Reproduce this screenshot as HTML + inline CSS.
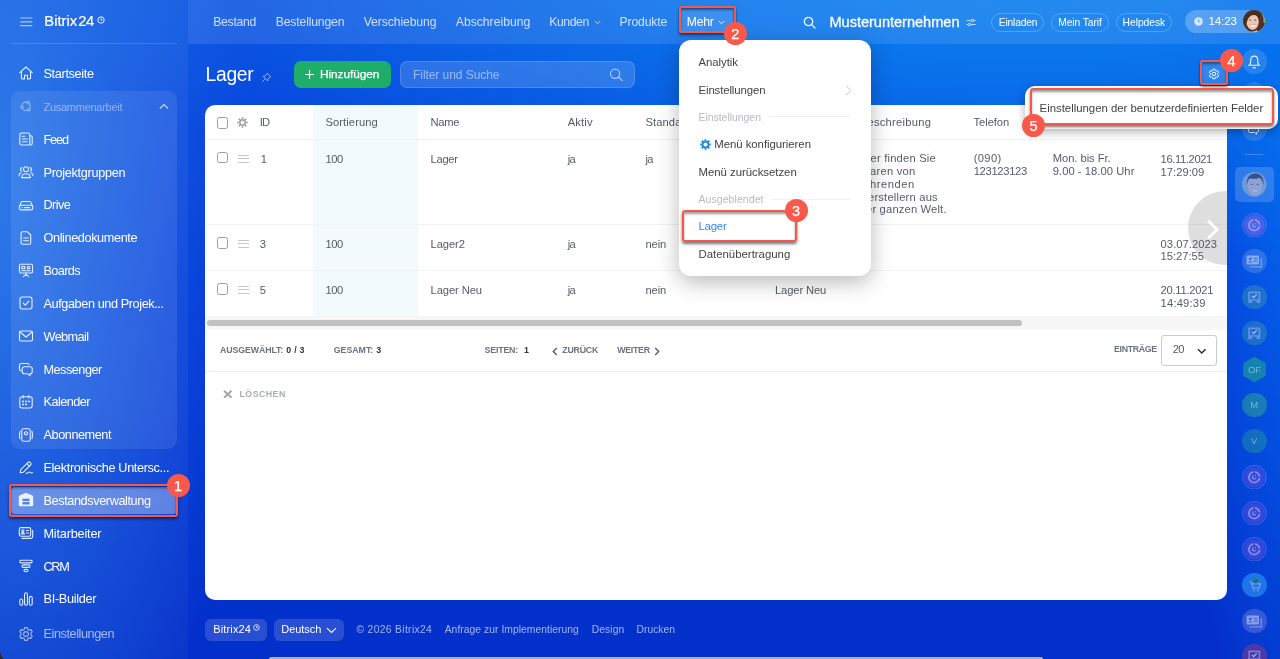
<!DOCTYPE html>
<html lang="de">
<head>
<meta charset="utf-8">
<title>Lager</title>
<style>
*{box-sizing:border-box;margin:0;padding:0}
html,body{width:1280px;height:659px;overflow:hidden}
body{font-family:"Liberation Sans",sans-serif;color:#fff;position:relative;
background:
 radial-gradient(ellipse 130px 760px at 1300px 60px, rgba(4,112,238,.92), rgba(4,112,238,0) 100%),
 radial-gradient(ellipse 1000px 290px at 1030px -30px, rgba(10,130,240,1), rgba(10,130,240,.75) 35%, rgba(10,130,240,0) 100%),
 radial-gradient(ellipse 250px 720px at 0px 180px, rgba(40,125,234,.85), rgba(40,125,234,0) 100%),
 linear-gradient(180deg,#0a48de 0%,#0437d8 45%,#0330ca 100%);}
.abs{position:absolute}
.t{position:absolute;white-space:nowrap;line-height:1}
#top{position:absolute;left:188px;top:0;width:1092px;height:43.5px;background:rgba(255,255,255,.105)}
#sep{position:absolute;left:11px;top:43px;width:166px;height:1px;background:rgba(255,255,255,.15)}
#group{position:absolute;left:11px;top:91px;width:166px;height:358px;border-radius:9px;background:rgba(255,255,255,.085)}
.ic{position:absolute;left:18px;width:16px;height:16px}
.ic svg{display:block;width:16px;height:16px;fill:none;stroke:#fff;stroke-width:1.1;stroke-linecap:round;stroke-linejoin:round;opacity:.88}
.pill{position:absolute;top:13px;height:18.8px;border:1px solid rgba(255,255,255,.22);border-radius:10px}
.red{position:absolute;border:2.8px solid #f6584b;border-radius:3px;box-shadow:0 2px 3px rgba(0,0,0,.55), inset 0 2px 2.5px rgba(0,0,0,.4)}
.badge{position:absolute;width:23px;height:23px;border-radius:50%;background:#f9594b;color:#fff;font-size:14.5px;line-height:24.4px;text-align:center;-webkit-text-stroke:.25px #fff}
#grid{position:absolute;left:205px;top:104.5px;width:1022px;height:495.5px;background:#fff;border-radius:10px;overflow:hidden}
.hl{position:absolute;left:0;width:1022px;height:1px;background:#f1f3f5}
.cb{position:absolute;left:11.500px;width:11.5px;height:11.5px;border:1.2px solid #999da4;border-radius:2.5px;background:#fff}
.drag{position:absolute;left:33px;width:11px;height:8px;border-top:1.2px solid #c4c7cc;border-bottom:1.2px solid #c4c7cc}
.drag:after{content:"";position:absolute;left:0;right:0;top:2.300px;height:1.2px;background:#c4c7cc}
.rc{position:absolute;left:1242px;width:24.5px;height:24.5px;border-radius:50%}
.rc svg{position:absolute;left:0;top:0;width:24.5px;height:24.5px}
.rc span{position:absolute;left:0;right:0;top:0;line-height:24.5px;text-align:center;font-size:9.5px;color:rgba(255,255,255,.6)}
#pop{position:absolute;left:679px;top:40px;width:191.5px;height:236px;background:#fff;border-radius:12px;box-shadow:0 6px 22px rgba(0,0,0,.28)}
#tip{position:absolute;left:1025px;top:86px;width:252.8px;height:43.4px;background:#fff;border-radius:10px;box-shadow:0 3px 10px rgba(0,0,0,.3)}
</style>
</head>
<body>
<div id="app" style="position:absolute;left:0;top:0;width:1280px;height:659px;will-change:transform">
<div id="top"></div>
<div class="abs" style="left:0;top:0;width:188px;height:659px;background:linear-gradient(180deg,rgba(255,255,255,.05) 0%,rgba(255,255,255,.045) 60%,rgba(255,255,255,.03) 100%)"></div>
<div id="sep"></div>
<div id="group"></div>
<svg class="abs" style="left:20px;top:16.500px" width="13" height="10" viewBox="0 0 13 10"><path d="M.3 1h12M.3 4.800h12M.3 8.600h12" stroke="rgba(255,255,255,.62)" stroke-width="1.200" fill="none"/></svg>
<svg class="abs" style="left:96.500px;top:15.500px" width="8" height="8" viewBox="0 0 8 8"><circle cx="4" cy="4" r="3.200" stroke="#fff" stroke-width=".9" fill="none"/><path d="M4 2.200V4.100h1.500" stroke="#fff" stroke-width=".9" fill="none"/></svg>
<div class="abs" style="left:11px;top:487.400px;width:166px;height:26.600px;background:rgba(255,255,255,.33);border-radius:4px"></div>
<svg class="abs" style="left:159px;top:102.500px" width="10" height="7" viewBox="0 0 10 7"><path d="M1 5.500 5 1.500l4 4" stroke="rgba(255,255,255,.72)" stroke-width="1.200" fill="none"/></svg>
<div class="ic" style="top:65.4px"><svg viewBox="0 0 16 16"><path d="M1.800 7.600 8 2l6.200 5.600"/><path d="M3.400 6.500V13c0 .5.400.9.900.9h2.200v-3.600h3v3.600h2.200c.5 0 .9-.4.900-.9V6.500"/></svg></div>
<div class="ic" style="top:98.1px"><svg viewBox="0 0 16 16" style="opacity:0.45"><circle cx="8" cy="8.300" r="4.200"/><circle cx="10.300" cy="4.600" r="1.300" fill="#2f66de"/><circle cx="3.900" cy="9" r="1.300" fill="#2f66de"/><circle cx="10.800" cy="11.600" r="1.300" fill="#2f66de"/></svg></div>
<div class="ic" style="top:131.1px"><svg viewBox="0 0 16 16"><rect x="1.800" y="2" width="10" height="12" rx="1.800"/><path d="M11.800 4.800h1c.8 0 1.400.6 1.400 1.400v6.300c0 .8-.7 1.500-1.500 1.500h-1"/><path d="M4.300 5.200h2.500M4.300 8h5M4.300 10.800h5"/></svg></div>
<div class="ic" style="top:163.9px"><svg viewBox="0 0 16 16"><circle cx="8" cy="5.200" r="2.500"/><path d="M3.600 13.600c0-2.500 1.900-3.900 4.400-3.900s4.400 1.400 4.400 3.900z"/><path d="M3.800 3.600c-1.700.4-1.700 3.200 0 3.600M1 11.800c0-1.600.8-2.600 2-2.900M12.200 3.600c1.700.4 1.700 3.200 0 3.600M15 11.800c0-1.600-.8-2.600-2-2.900"/></svg></div>
<div class="ic" style="top:196.7px"><svg viewBox="0 0 16 16"><path d="M1.400 9.500 3 5.600c.3-.7.900-1.100 1.600-1.100h6.800c.7 0 1.300.4 1.600 1.100l1.600 3.900"/><rect x="1.300" y="8.300" width="13.400" height="4.600" rx="1.700"/><path d="M4 10.600h.3M6.500 10.600h5.200"/></svg></div>
<div class="ic" style="top:229.6px"><svg viewBox="0 0 16 16"><path d="M4.300 1.800h5.200l3.200 3.200v8c0 .7-.5 1.200-1.200 1.200H4.300c-.7 0-1.200-.5-1.200-1.200V3c0-.7.500-1.200 1.200-1.200z"/><path d="M5.600 8h4.800M5.600 10.800h4.800"/></svg></div>
<div class="ic" style="top:262.4px"><svg viewBox="0 0 16 16"><rect x="1.500" y="2.200" width="13" height="8.800" rx="1.200"/><rect x="3.800" y="4.500" width="3" height="2.200"/><circle cx="10.600" cy="5.600" r="1.300"/><path d="M3.800 8.800h8.400M8 11v1.300M5.300 14.600 8 12.300l2.700 2.300"/></svg></div>
<div class="ic" style="top:295.2px"><svg viewBox="0 0 16 16"><rect x="2" y="2" width="12" height="12" rx="2.200"/><path d="M5.200 8.200 7.200 10.100l3.700-3.900"/></svg></div>
<div class="ic" style="top:328.0px"><svg viewBox="0 0 16 16"><rect x="1.500" y="3" width="13" height="10" rx="1.500"/><path d="M2 4 8 9l6-5"/></svg></div>
<div class="ic" style="top:360.9px"><svg viewBox="0 0 16 16"><path d="M6.200 5.800h6c1.100 0 2 .9 2 2v3c0 1.100-.9 2-2 2h-.2v1.900l-2.200-1.900H6.200c-1.100 0-2-.9-2-2v-3c0-1.100.9-2 2-2z"/><path d="M2.800 10c-.8-.3-1.300-1-1.300-1.900V4.500c0-1.100.9-2 2-2h5.700c.8 0 1.500.5 1.800 1.100"/></svg></div>
<div class="ic" style="top:393.7px"><svg viewBox="0 0 16 16"><rect x="1.800" y="2.800" width="12.400" height="11.200" rx="2.200"/><path d="M5.200 1.600v2.400M10.800 1.600v2.400"/><path d="M4.900 7.400h.3M7.900 7.400h.3M10.800 7.400h.3M4.900 10.400h.3M7.900 10.400h.3" stroke-width="1.700"/></svg></div>
<div class="ic" style="top:426.5px"><svg viewBox="0 0 16 16"><rect x="3.800" y="1.800" width="8.400" height="12.400" rx="1.800"/><path d="M2 4.300q-.9 3.700 0 7.400M14 4.300q.9 3.700 0 7.400"/><circle cx="8" cy="6.300" r="1.600"/></svg></div>
<div class="ic" style="top:459.4px"><svg viewBox="0 0 16 16"><path d="M2.800 10.600 10 3.400c.6-.6 1.500-.6 2.100 0l.5.500c.6.600.6 1.500 0 2.100L5.400 13.200 2.200 13.800z"/><path d="M8.800 4.700l2.500 2.500"/><path d="M8 14.300c1.500.4 2.400-1.300 3.400-1.300s1.100 1.500 3.100.8"/></svg></div>
<div class="ic" style="top:492.2px"><svg viewBox="0 0 16 16"><path d="M.8 4.800c0-.6.300-1 .8-1.200L7.400 1.100c.4-.2.800-.2 1.200 0l5.800 2.500c.5.200.8.600.8 1.200v8.200c0 .7-.5 1.200-1.200 1.200H2c-.7 0-1.200-.5-1.200-1.200z" fill="#fff" stroke="none"/><rect x="4.500" y="6.700" width="7" height="2.300" fill="#4f7fe6" stroke="none"/><rect x="4.500" y="10" width="7" height="2.450" fill="#4f7fe6" stroke="none"/></svg></div>
<div class="ic" style="top:525.0px"><svg viewBox="0 0 16 16"><rect x="1.300" y="2.600" width="11.400" height="8.600" rx="1.700"/><path d="M14.700 5.200v6.400c0 1-.8 1.800-1.800 1.800H4"/><circle cx="4.800" cy="5.800" r="1.100"/><path d="M3.100 9c.2-1 .9-1.400 1.700-1.400s1.500.4 1.700 1.400zM8.300 5.500h2.400M8.300 8h2.400"/></svg></div>
<div class="ic" style="top:557.9px"><svg viewBox="0 0 16 16"><rect x="1.800" y="2.200" width="12.400" height="2.700" rx="1.350"/><rect x="4" y="6.900" width="8" height="2.500" rx="1.250"/><rect x="6" y="11.400" width="4" height="2.400" rx="1.200"/></svg></div>
<div class="ic" style="top:590.7px"><svg viewBox="0 0 16 16"><rect x="1.800" y="8" width="2.900" height="6.200" rx="1.450"/><rect x="6.550" y="1.800" width="2.900" height="12.400" rx="1.450"/><rect x="11.300" y="5.400" width="2.900" height="8.800" rx="1.450"/></svg></div>
<div class="ic" style="top:625.7px"><svg viewBox="0 0 16 16" style="opacity:0.6"><circle cx="8" cy="8" r="2.400"/><path d="M6.700 1.600h2.600l.5 1.800 1.300.7 1.800-.5 1.300 2.200-1.300 1.400v1.600l1.300 1.400-1.300 2.200-1.800-.5-1.300.7-.5 1.800H6.700l-.5-1.800-1.300-.7-1.800.5-1.300-2.200 1.300-1.400V7.200L1.800 5.800l1.300-2.200 1.800.5 1.300-.7z"/></svg></div>
<svg class="abs" style="left:593.5px;top:19.5px" width="7" height="5" viewBox="0 0 7 5"><path d="M.8 1 3.500 3.700 6.200 1" stroke="rgba(255,255,255,.7)" stroke-width="1" fill="none"/></svg>
<div class="abs" style="left:681px;top:8.500px;width:52px;height:22px;background:rgba(255,255,255,.12)"></div>
<svg class="abs" style="left:717.5px;top:19.5px" width="7" height="5" viewBox="0 0 7 5"><path d="M.8 1 3.500 3.700 6.200 1" stroke="rgba(255,255,255,.85)" stroke-width="1" fill="none"/></svg>
<svg class="abs" style="left:803px;top:15.500px" width="13" height="13" viewBox="0 0 13 13"><circle cx="5.500" cy="5.500" r="4.200" stroke="#fff" stroke-width="1.200" fill="none"/><path d="M8.700 8.700 12 12" stroke="#fff" stroke-width="1.200" stroke-linecap="round"/></svg>
<svg class="abs" style="left:965.500px;top:18px" width="10" height="9" viewBox="0 0 10 9"><path d="M.5 2.500h9M.5 6.500h9" stroke="rgba(255,255,255,.7)" stroke-width="1"/><circle cx="6.500" cy="2.500" r="1.300" fill="#2f86e6" stroke="rgba(255,255,255,.8)" stroke-width=".9"/><circle cx="3.500" cy="6.500" r="1.300" fill="#2f86e6" stroke="rgba(255,255,255,.8)" stroke-width=".9"/></svg>
<div class="pill" style="left:991.200px;width:53px"></div>
<div class="pill" style="left:1050.700px;width:58px"></div>
<div class="pill" style="left:1116.200px;width:55.800px"></div>
<div class="abs" style="left:1185px;top:9.600px;width:80.200px;height:23.600px;border-radius:12px;background:rgba(255,255,255,.24)"></div>
<svg class="abs" style="left:1194.200px;top:17.200px" width="9" height="9" viewBox="0 0 9 9"><circle cx="4.500" cy="4.500" r="4.300" fill="rgba(255,255,255,.75)"/><path d="M4.500 2.200V4.700h1.900" stroke="#5d9cec" stroke-width=".9" fill="none"/></svg>
<svg class="abs" style="left:1243px;top:10px" width="22" height="22" viewBox="0 0 22 22"><defs><clipPath id="av"><circle cx="11" cy="11" r="11"/></clipPath><filter id="bl" x="-10%" y="-10%" width="120%" height="120%"><feGaussianBlur stdDeviation=".45"/></filter></defs><g clip-path="url(#av)"><g filter="url(#bl)"><rect x="-2" y="-2" width="26" height="26" fill="#4a3023"/><path d="M15 -1h9v14h-3.500z" fill="#8fb548"/><path d="M14.500 0c4 1.500 6.500 6 6 12-.3 4-2 7-4.500 9l-3-1z" fill="#4f3325"/><ellipse cx="9.600" cy="11.600" rx="6.200" ry="8.300" fill="#ebc6b2"/><path d="M5 21q4.500 2 9-1l1 3H4z" fill="#e6bda8"/><path d="M2.500 13C1.500 5 6 1 11 1.500c4 .4 6 3 5.800 8.500C15.500 7 13.500 5 10.500 5 7.500 5 4.500 8 3.800 13z" fill="#4b2e20"/><ellipse cx="7" cy="10" rx="1.100" ry=".6" fill="#5b4034"/><ellipse cx="12.300" cy="10" rx="1.100" ry=".6" fill="#5b4034"/><path d="M7 14.600q3 1.200 6 0-.8 2.200-3 2.200t-3-2.200z" fill="#fff"/><path d="M6.800 14.400q3.200 1.200 6.400 0" stroke="#c98f80" stroke-width=".5" fill="none"/></g></g></svg>
<svg class="abs" style="left:260.500px;top:71.500px" width="11" height="11" viewBox="0 0 11 11"><path d="M6.200 1.200 9.800 4.800 8.600 5.300 7 6.900 6.700 8.900 2.100 4.300 4.100 4 5.700 2.400zM4.300 6.700 1 10" stroke="rgba(255,255,255,.6)" stroke-width=".9" fill="none" stroke-linejoin="round"/></svg>
<div class="abs" style="left:293.500px;top:61px;width:97px;height:26.500px;border-radius:7px;background:#1fae6a"></div>
<svg class="abs" style="left:304.500px;top:69.500px" width="9" height="9" viewBox="0 0 9 9"><path d="M4.500 0v9M0 4.500h9" stroke="#fff" stroke-width="1.200"/></svg>
<div class="abs" style="left:399.500px;top:61px;width:235px;height:26.500px;border-radius:7px;background:rgba(255,255,255,.15);border:1px solid rgba(255,255,255,.15)"></div>
<svg class="abs" style="left:608.800px;top:67.800px" width="14.700" height="13.650" viewBox="0 0 14 13"><circle cx="5.800" cy="5.500" r="4.400" stroke="rgba(255,255,255,.6)" stroke-width="1.100" fill="none"/><path d="M9.200 8.800 12.800 12.200" stroke="rgba(255,255,255,.6)" stroke-width="1.100" stroke-linecap="round"/></svg>
<div class="abs" style="left:1201px;top:62px;width:26px;height:21.500px;background:rgba(255,255,255,.16)"></div>
<svg class="abs" style="left:1207.700px;top:68.300px" width="12" height="12" viewBox="0 0 16 16"><g fill="none" stroke="#fff" stroke-width="1.300" stroke-linejoin="round"><circle cx="8" cy="8" r="2.400"/><path d="M6.700 1.600h2.600l.5 1.800 1.300.7 1.800-.5 1.300 2.200-1.300 1.400v1.600l1.300 1.400-1.300 2.200-1.800-.5-1.300.7-.5 1.800H6.700l-.5-1.800-1.300-.7-1.800.5-1.300-2.200 1.300-1.400V7.200L1.800 5.800l1.300-2.200 1.800.5 1.300-.7z"/></g></svg>
<div class="abs" style="left:204.700px;top:619.200px;width:62.300px;height:21.400px;border-radius:6px;background:rgba(255,255,255,.15)"></div>
<div class="abs" style="left:273.700px;top:619.200px;width:70px;height:21.400px;border-radius:6px;background:rgba(255,255,255,.15)"></div>
<svg class="abs" style="left:252.500px;top:624.300px" width="7" height="7" viewBox="0 0 8 8"><circle cx="4" cy="4" r="3.200" stroke="#fff" stroke-width=".9" fill="none"/><path d="M4 2.200V4.100h1.500" stroke="#fff" stroke-width=".9" fill="none"/></svg>
<svg class="abs" style="left:325.500px;top:627px" width="11" height="7" viewBox="0 0 11 7"><path d="M1 1.200 5.500 5.500 10 1.200" stroke="#fff" stroke-width="1.100" fill="none"/></svg>
<div class="abs" style="left:269px;top:656.700px;width:774px;height:3px;background:#a9aeb8;border-radius:2px 2px 0 0"></div>
<div id="grid">
<div class="abs" style="left:107.5px;top:0;width:105px;height:211.75px;background:#f2fafe"></div>
<div class="hl" style="top:34.8px"></div>
<div class="hl" style="top:119.8px"></div>
<div class="hl" style="top:165.7px"></div>
<div class="hl" style="top:211.8px"></div>
<div class="abs" style="left:0;top:212.5px;width:1022px;height:12.500px;background:#f6f7f9"></div>
<div class="abs" style="left:2px;top:215.1px;width:814.500px;height:6.300px;border-radius:3.200px;background:#c1c1c1"></div>
<div class="hl" style="top:266.5px;background:#e8edf0"></div>
<div class="cb" style="top:12.50px"></div>
<div class="cb" style="top:47.25px"></div>
<div class="cb" style="top:132.50px"></div>
<div class="cb" style="top:178.50px"></div>
<div class="drag" style="top:50.00px"></div>
<div class="drag" style="top:135.20px"></div>
<div class="drag" style="top:181.20px"></div>
<svg class="abs" style="left:32px;top:12.7px" width="11" height="11" viewBox="0 0 11 11"><g fill="#a6abb2"><circle cx="5.500" cy="5.500" r="3.500"/><g stroke="#a6abb2" stroke-width="1.500"><path d="M5.500 0v11M0 5.500h11M1.600 1.600l7.800 7.800M9.400 1.600 1.600 9.400"/></g></g><circle cx="5.500" cy="5.500" r="1.700" fill="#fff"/></svg>
<svg class="abs" style="left:347px;top:242.8px" width="6" height="9" viewBox="0 0 6 9"><path d="M4.800 1 1.300 4.500l3.500 3.500" stroke="#535c69" stroke-width="1.400" fill="none"/></svg>
<svg class="abs" style="left:449.3px;top:242.8px" width="6" height="9" viewBox="0 0 6 9"><path d="M1.200 1l3.500 3.500L1.200 8" stroke="#535c69" stroke-width="1.400" fill="none"/></svg>
<div class="abs" style="left:955.5px;top:230.1px;width:56.100px;height:31.100px;border:1px solid #c6cdd3;border-radius:3px"></div>
<svg class="abs" style="left:991.8px;top:243.7px" width="9.500" height="6.500" viewBox="0 0 9.500 6.500"><path d="M1 1.200 4.750 5 8.500 1.200" stroke="#333" stroke-width="1.500" fill="none"/></svg>
<svg class="abs" style="left:18.2px;top:285.0px" width="9.500" height="8.500" viewBox="0 0 9.500 8.500"><path d="M1 .8 8.500 7.700M8.500 .8 1 7.700" stroke="#a2a7ae" stroke-width="2" fill="none"/></svg>
<div class="abs" style="left:983px;top:86.8px;width:74px;height:74px;border-radius:50%;background:rgba(0,0,0,.13)"></div>
<svg class="abs" style="left:1001px;top:114.0px" width="13" height="21" viewBox="0 0 13 21"><path d="M2 1.500 11 10.500 2 19.500" stroke="#fff" stroke-width="2.900" fill="none"/></svg>
</div>
<div class="rc" style="top:49.25px;background:rgba(255,255,255,.13)"><svg viewBox="0 0 24.500 24.500"><path d="M6.600 16.300h11.300M7.800 16c.8-1 .9-2 .9-4.600 0-2.500 1.500-4.300 3.550-4.300s3.550 1.800 3.550 4.300c0 2.600.1 3.600.9 4.600M11 18.500q1.250 1 2.500 0" stroke="rgba(255,255,255,.9)" stroke-width="1.100" fill="none" stroke-linecap="round"/></svg></div>
<div class="rc" style="top:82.05px;background:rgba(255,255,255,.13)"></div>
<div class="rc" style="top:116.05px;background:rgba(255,255,255,.13)"><svg viewBox="0 0 24.500 24.500"><path d="M8 10.500h7c.8 0 1.500.7 1.500 1.500v3c0 .8-.7 1.500-1.500 1.500h-.5v1.800l-2-1.800H8c-.8 0-1.500-.7-1.500-1.500v-3c0-.8.700-1.500 1.500-1.500z" stroke="rgba(255,255,255,.85)" stroke-width="1" fill="none"/></svg></div>
<div class="abs" style="left:1245px;top:153.500px;width:18px;height:1px;background:rgba(255,255,255,.22)"></div>
<div class="abs" style="left:1235px;top:166.600px;width:38.700px;height:35.700px;border-radius:5px;background:rgba(255,255,255,.17)"></div>
<svg class="abs" style="left:1242px;top:172.100px" width="24.600" height="24.600" viewBox="0 0 24 24"><defs><clipPath id="av2"><circle cx="12" cy="12" r="12"/></clipPath></defs><g clip-path="url(#av2)" opacity=".5"><g filter="url(#bl)"><rect x="-2" y="-2" width="28" height="28" fill="#a9b9c9"/><ellipse cx="12.600" cy="13.500" rx="7.300" ry="9.800" fill="#eec7b8"/><path d="M4.800 13C4 5 8 1.500 13 1.500c5 0 8.500 3.500 8 11-.8-3.500-2-6-4-7-3 1.500-7 1.500-9.500.5-1.500 1.500-2.300 4-2.700 7z" fill="#3a2c2a"/><ellipse cx="9.600" cy="12" rx="1.100" ry=".6" fill="#5b4034"/><ellipse cx="15.400" cy="12" rx="1.100" ry=".6" fill="#5b4034"/><path d="M9.300 17q3.200 1.200 6.400 0-.9 2.300-3.200 2.300T9.300 17z" fill="#fff"/></g></g></svg>
<div style="opacity:.72">
<div class="rc" style="top:212.75px;background:rgba(120,100,240,.25)"><svg viewBox="0 0 24.500 24.500"><circle cx="12.250" cy="12.250" r="11.900" fill="none" stroke="rgba(255,255,255,.38)" stroke-width=".6"/><circle cx="12.250" cy="12.250" r="10.300" fill="#6a62ea"/><circle cx="12.250" cy="12.250" r="5.300" fill="none" stroke="rgba(255,255,255,.6)" stroke-width="1.700"/><circle cx="12.250" cy="12.250" r="2.400" fill="rgba(255,255,255,.5)"/><path d="M12.250 6v6.250h6.200" stroke="#6a62ea" stroke-width="1.500" fill="none"/></svg></div>
<div class="rc" style="top:248.75px;background:rgba(255,255,255,.22)"><svg viewBox="0 0 24.500 24.500"><rect x="4.500" y="6.500" width="12.500" height="9" rx="1" fill="rgba(255,255,255,.62)"/><path d="M19.300 9v8.800H7.500" stroke="rgba(255,255,255,.5)" stroke-width="1.300" fill="none"/><circle cx="8.300" cy="9.800" r="1.400" fill="#4a6fd8"/><path d="M6 13.600q2.300-2.700 4.600 0z" fill="#4a6fd8"/><path d="M11.800 9.500h3.700M11.800 12h3.700" stroke="#4a6fd8" stroke-width="1.100"/></svg></div>
<div class="rc" style="top:284.75px;background:rgba(100,200,140,.38)"><svg viewBox="0 0 24.500 24.500"><rect x="6.300" y="6.500" width="12" height="11.500" rx=".8" fill="rgba(185,190,255,.7)"/><rect x="8" y="8.200" width="8.600" height="6" fill="#2f80c4"/><path d="M10 11l1.700 1.600 3-3.200" stroke="rgba(235,238,255,.95)" stroke-width="1.300" fill="none"/><rect x="10" y="15.600" width="4.600" height="2.400" fill="#2f80c4"/></svg></div>
<div class="rc" style="top:320.75px;background:rgba(100,200,140,.36)"><svg viewBox="0 0 24.500 24.500"><rect x="6.300" y="6.500" width="12" height="11.500" rx=".8" fill="rgba(185,190,255,.7)"/><rect x="8" y="8.200" width="8.600" height="6" fill="#2c7cc8"/><path d="M10 11l1.700 1.600 3-3.200" stroke="rgba(235,238,255,.95)" stroke-width="1.300" fill="none"/><rect x="10" y="15.600" width="4.600" height="2.400" fill="#2c7cc8"/></svg></div>
<svg class="abs" style="left:1241px;top:355.500px" width="27" height="27" viewBox="0 0 27 27"><path d="M13.500 1.200 24.200 7.300v12.400L13.500 25.800 2.800 19.700V7.300z" fill="#1b979c" stroke="#14a890" stroke-width=".8"/><text x="13.500" y="17" text-anchor="middle" font-family="Liberation Sans, sans-serif" font-size="9.500" fill="rgba(255,255,255,.62)">OF</text></svg>
<div class="rc" style="top:392.75px;background:rgba(60,200,120,.55)"><span>M</span></div>
<div class="rc" style="top:428.75px;background:rgba(60,200,120,.4)"><span>V</span></div>
<div class="rc" style="top:464.75px;background:rgba(120,100,240,.2)"><svg viewBox="0 0 24.500 24.500"><circle cx="12.250" cy="12.250" r="11.900" fill="none" stroke="rgba(255,255,255,.38)" stroke-width=".6"/><circle cx="12.250" cy="12.250" r="10.300" fill="#4c49dc"/><circle cx="12.250" cy="12.250" r="5.300" fill="none" stroke="rgba(255,255,255,.6)" stroke-width="1.700"/><circle cx="12.250" cy="12.250" r="2.400" fill="rgba(255,255,255,.5)"/><path d="M12.250 6v6.250h6.200" stroke="#4c49dc" stroke-width="1.500" fill="none"/></svg></div>
<div class="rc" style="top:500.75px;background:rgba(120,100,240,.2)"><svg viewBox="0 0 24.500 24.500"><circle cx="12.250" cy="12.250" r="11.900" fill="none" stroke="rgba(255,255,255,.38)" stroke-width=".6"/><circle cx="12.250" cy="12.250" r="10.300" fill="#4c49dc"/><circle cx="12.250" cy="12.250" r="5.300" fill="none" stroke="rgba(255,255,255,.6)" stroke-width="1.700"/><circle cx="12.250" cy="12.250" r="2.400" fill="rgba(255,255,255,.5)"/><path d="M12.250 6v6.250h6.200" stroke="#4c49dc" stroke-width="1.500" fill="none"/></svg></div>
<div class="rc" style="top:536.75px;background:rgba(120,100,240,.2)"><svg viewBox="0 0 24.500 24.500"><circle cx="12.250" cy="12.250" r="11.900" fill="none" stroke="rgba(255,255,255,.38)" stroke-width=".6"/><circle cx="12.250" cy="12.250" r="10.300" fill="#4c49dc"/><circle cx="12.250" cy="12.250" r="5.300" fill="none" stroke="rgba(255,255,255,.6)" stroke-width="1.700"/><circle cx="12.250" cy="12.250" r="2.400" fill="rgba(255,255,255,.5)"/><path d="M12.250 6v6.250h6.200" stroke="#4c49dc" stroke-width="1.500" fill="none"/></svg></div>
<div class="rc" style="top:572.75px;background:#2a8af2"><svg viewBox="0 0 24.500 24.500"><path d="M7.500 9h1.800l1.700 6h6l1.300-4.200H10" stroke="rgba(220,215,255,.62)" stroke-width="1.500" fill="none"/><circle cx="11.800" cy="17.500" r="1.100" fill="rgba(220,215,255,.62)"/><circle cx="16" cy="17.500" r="1.100" fill="rgba(220,215,255,.62)"/><circle cx="13.800" cy="7.800" r="2.800" fill="#2d9d4f"/><path d="M12.500 7.800l1 .9 1.600-1.700" stroke="#133" stroke-width=".8" fill="none"/></svg></div>
<div class="rc" style="top:608.75px;background:rgba(160,150,230,.45)"><svg viewBox="0 0 24.500 24.500"><rect x="4.500" y="6.500" width="12.500" height="9" rx="1" fill="rgba(255,255,255,.62)"/><path d="M19.300 9v8.800H7.500" stroke="rgba(255,255,255,.5)" stroke-width="1.300" fill="none"/><circle cx="8.300" cy="9.800" r="1.400" fill="#4a6fd8"/><path d="M6 13.600q2.300-2.700 4.600 0z" fill="#4a6fd8"/><path d="M11.800 9.500h3.700M11.800 12h3.700" stroke="#4a6fd8" stroke-width="1.100"/></svg></div>
<div class="rc" style="top:644.15px;background:#6c3a98"><svg viewBox="0 0 24.500 24.500"><rect x="6.300" y="6.500" width="12" height="11.500" rx=".8" fill="rgba(185,190,255,.7)"/><rect x="8" y="8.200" width="8.600" height="6" fill="#6c3a98"/><path d="M10 11l1.700 1.600 3-3.200" stroke="rgba(235,238,255,.95)" stroke-width="1.300" fill="none"/><rect x="10" y="15.600" width="4.600" height="2.400" fill="#6c3a98"/></svg></div>
</div>
<span id="a0" class="t" style="left:44.25px;top:14.00px;font-size:14.8px;color:#fff;letter-spacing:0.022px;-webkit-text-stroke:.2px #fff">Bitrix</span>
<span id="a1" class="t" style="left:78.3px;top:14.00px;font-size:14.8px;color:#fff;letter-spacing:-0.469px;-webkit-text-stroke:.2px #fff">24</span>
<span id="a2" class="t" style="left:43.5px;top:68.00px;font-size:12.7px;color:#fff;letter-spacing:-0.344px;">Startseite</span>
<span id="a3" class="t" style="left:43.5px;top:133.71px;font-size:12.7px;color:#fff;letter-spacing:-1.141px;">Feed</span>
<span id="a4" class="t" style="left:43.5px;top:166.50px;font-size:12.7px;color:#fff;letter-spacing:-0.312px;">Projektgruppen</span>
<span id="a5" class="t" style="left:43.5px;top:199.30px;font-size:12.7px;color:#fff;letter-spacing:-0.577px;">Drive</span>
<span id="a6" class="t" style="left:43.5px;top:232.21px;font-size:12.7px;color:#fff;letter-spacing:-0.390px;">Onlinedokumente</span>
<span id="a7" class="t" style="left:43.5px;top:265.00px;font-size:12.7px;color:#fff;letter-spacing:-0.641px;">Boards</span>
<span id="a8" class="t" style="left:43.5px;top:297.80px;font-size:12.7px;color:#fff;letter-spacing:-0.409px;">Aufgaben und Projek...</span>
<span id="a9" class="t" style="left:43.5px;top:330.61px;font-size:12.7px;color:#fff;letter-spacing:-0.604px;">Webmail</span>
<span id="a10" class="t" style="left:43.5px;top:363.50px;font-size:12.7px;color:#fff;letter-spacing:-0.508px;">Messenger</span>
<span id="a11" class="t" style="left:43.5px;top:396.30px;font-size:12.7px;color:#fff;letter-spacing:-0.542px;">Kalender</span>
<span id="a12" class="t" style="left:43.5px;top:429.11px;font-size:12.7px;color:#fff;letter-spacing:-0.439px;">Abonnement</span>
<span id="a13" class="t" style="left:43.5px;top:462.00px;font-size:12.7px;color:#fff;letter-spacing:-0.347px;">Elektronische Untersc...</span>
<span id="a14" class="t" style="left:43.5px;top:494.80px;font-size:12.7px;color:#fff;letter-spacing:-0.398px;">Bestandsverwaltung</span>
<span id="a15" class="t" style="left:43.5px;top:527.61px;font-size:12.7px;color:#fff;letter-spacing:-0.194px;">Mitarbeiter</span>
<span id="a16" class="t" style="left:43.5px;top:560.50px;font-size:12.7px;color:#fff;letter-spacing:-1.303px;">CRM</span>
<span id="a17" class="t" style="left:43.5px;top:593.30px;font-size:12.7px;color:#fff;letter-spacing:-0.302px;">BI-Builder</span>
<span id="a18" class="t" style="left:43.5px;top:101.71px;font-size:11px;color:rgba(255,255,255,.45);letter-spacing:-0.273px;">Zusammenarbeit</span>
<span id="a19" class="t" style="left:43.5px;top:628.30px;font-size:12.7px;color:rgba(255,255,255,.62);letter-spacing:-0.432px;">Einstellungen</span>
<span id="a20" class="t" style="left:213.25px;top:16.02px;font-size:12.2px;color:rgba(255,255,255,.78);letter-spacing:-0.289px;">Bestand</span>
<span id="a21" class="t" style="left:275.75px;top:16.02px;font-size:12.2px;color:rgba(255,255,255,.78);letter-spacing:-0.158px;">Bestellungen</span>
<span id="a22" class="t" style="left:363.75px;top:16.02px;font-size:12.2px;color:rgba(255,255,255,.78);letter-spacing:-0.101px;">Verschiebung</span>
<span id="a23" class="t" style="left:455.75px;top:16.02px;font-size:12.2px;color:rgba(255,255,255,.78);letter-spacing:-0.003px;">Abschreibung</span>
<span id="a24" class="t" style="left:549.25px;top:16.02px;font-size:12.2px;color:rgba(255,255,255,.78);letter-spacing:-0.406px;">Kunden</span>
<span id="a25" class="t" style="left:619.5px;top:16.02px;font-size:12.2px;color:rgba(255,255,255,.78);letter-spacing:-0.147px;">Produkte</span>
<span id="a26" class="t" style="left:686.75px;top:16.02px;font-size:12.2px;color:#fff;letter-spacing:-0.260px;">Mehr</span>
<span id="a27" class="t" style="left:829.5px;top:14.77px;font-size:14.6px;color:#fff;letter-spacing:-0.038px;-webkit-text-stroke:.3px #fff">Musterunternehmen</span>
<span id="a28" class="t" style="left:998.75px;top:18.02px;font-size:10.3px;color:#fff;letter-spacing:-0.190px;">Einladen</span>
<span id="a29" class="t" style="left:1058.25px;top:18.02px;font-size:10.3px;color:#fff;letter-spacing:-0.106px;">Mein Tarif</span>
<span id="a30" class="t" style="left:1122.6px;top:18.02px;font-size:10.3px;color:#fff;letter-spacing:-0.048px;">Helpdesk</span>
<span id="a31" class="t" style="left:1208.4px;top:15.31px;font-size:11.6px;color:#fff;letter-spacing:-0.104px;">14:23</span>
<span id="a32" class="t" style="left:205.5px;top:65.01px;font-size:19.3px;color:#fff;letter-spacing:-0.270px;">Lager</span>
<span id="a33" class="t" style="left:320px;top:69.01px;font-size:11.8px;color:#fff;letter-spacing:-0.049px;-webkit-text-stroke:.25px #fff">Hinzufügen</span>
<span id="a34" class="t" style="left:413px;top:69.01px;font-size:12px;color:rgba(255,255,255,.5);letter-spacing:-0.059px;">Filter und Suche</span>
<span id="a35" class="t" style="left:259.75px;top:117.25px;font-size:11.2px;color:#535c69;letter-spacing:-0.938px;">ID</span>
<span id="a36" class="t" style="left:325.5px;top:117.25px;font-size:11.2px;color:#535c69;letter-spacing:0.069px;">Sortierung</span>
<span id="a37" class="t" style="left:430.5px;top:117.25px;font-size:11.2px;color:#535c69;letter-spacing:-0.281px;">Name</span>
<span id="a38" class="t" style="left:567.75px;top:117.25px;font-size:11.2px;color:#535c69;letter-spacing:0.125px;">Aktiv</span>
<span id="a39" class="t" style="left:645.5px;top:117.25px;font-size:11.2px;color:#535c69;letter-spacing:0.085px;">Standard</span>
<span id="a40" class="t" style="left:775px;top:117.25px;font-size:11.2px;color:#535c69;letter-spacing:-0.174px;">Adresse</span>
<span id="a41" class="t" style="left:859.7px;top:117.25px;font-size:11.2px;color:#535c69;letter-spacing:0.262px;">Beschreibung</span>
<span id="a42" class="t" style="left:973.5px;top:117.25px;font-size:11.2px;color:#535c69;letter-spacing:-0.055px;">Telefon</span>
<span id="a43" class="t" style="left:1052.7px;top:117.25px;font-size:11.2px;color:#535c69;letter-spacing:-0.023px;">Arbeitszeit</span>
<span id="a44" class="t" style="left:1160.6px;top:117.25px;font-size:11.2px;color:#535c69;letter-spacing:-0.084px;">Erstellt am</span>
<span id="a45" class="t" style="left:260.7px;top:153.50px;font-size:11.2px;color:#535c69;">1</span>
<span id="a46" class="t" style="left:325.5px;top:153.50px;font-size:11.2px;color:#535c69;letter-spacing:-0.436px;">100</span>
<span id="a47" class="t" style="left:430.5px;top:153.50px;font-size:11.2px;color:#535c69;letter-spacing:-0.281px;">Lager</span>
<span id="a48" class="t" style="left:567.75px;top:153.50px;font-size:11.2px;color:#535c69;letter-spacing:-0.719px;">ja</span>
<span id="a49" class="t" style="left:645.5px;top:153.50px;font-size:11.2px;color:#535c69;letter-spacing:-0.719px;">ja</span>
<span id="a50" class="t" style="left:259.75px;top:238.50px;font-size:11.2px;color:#535c69;">3</span>
<span id="a51" class="t" style="left:325.5px;top:238.50px;font-size:11.2px;color:#535c69;letter-spacing:-0.436px;">100</span>
<span id="a52" class="t" style="left:430.5px;top:238.50px;font-size:11.2px;color:#535c69;letter-spacing:-0.069px;">Lager2</span>
<span id="a53" class="t" style="left:567.75px;top:238.50px;font-size:11.2px;color:#535c69;letter-spacing:-0.719px;">ja</span>
<span id="a54" class="t" style="left:645.5px;top:238.50px;font-size:11.2px;color:#535c69;letter-spacing:-0.135px;">nein</span>
<span id="a55" class="t" style="left:259.75px;top:284.50px;font-size:11.2px;color:#535c69;">5</span>
<span id="a56" class="t" style="left:325.5px;top:284.50px;font-size:11.2px;color:#535c69;letter-spacing:-0.436px;">100</span>
<span id="a57" class="t" style="left:430.5px;top:284.50px;font-size:11.2px;color:#535c69;letter-spacing:-0.094px;">Lager Neu</span>
<span id="a58" class="t" style="left:567.75px;top:284.50px;font-size:11.2px;color:#535c69;letter-spacing:-0.719px;">ja</span>
<span id="a59" class="t" style="left:645.5px;top:284.50px;font-size:11.2px;color:#535c69;letter-spacing:-0.135px;">nein</span>
<span id="a60" class="t" style="left:775px;top:284.50px;font-size:11.2px;color:#535c69;letter-spacing:-0.125px;">Lager Neu</span>
<span id="a61" class="t" style="left:859.7px;top:153.00px;font-size:11.2px;color:#535c69;letter-spacing:0.186px;">Hier finden Sie</span>
<span id="a62" class="t" style="left:859.7px;top:165.84px;font-size:11.2px;color:#535c69;letter-spacing:0.227px;">Waren von</span>
<span id="a63" class="t" style="left:859.7px;top:178.67px;font-size:11.2px;color:#535c69;letter-spacing:0.514px;">führenden</span>
<span id="a64" class="t" style="left:859.7px;top:191.50px;font-size:11.2px;color:#535c69;letter-spacing:0.196px;">Herstellern aus</span>
<span id="a65" class="t" style="left:859.7px;top:204.33px;font-size:11.2px;color:#535c69;letter-spacing:0.162px;">der ganzen Welt.</span>
<span id="a66" class="t" style="left:973.7px;top:153.31px;font-size:11.2px;color:#535c69;letter-spacing:0.344px;">(090)</span>
<span id="a67" class="t" style="left:973.7px;top:166.11px;font-size:11.2px;color:#535c69;letter-spacing:-0.312px;">123123123</span>
<span id="a68" class="t" style="left:1052.7px;top:153.31px;font-size:11.2px;color:#535c69;letter-spacing:-0.041px;">Mon. bis Fr.</span>
<span id="a69" class="t" style="left:1052.7px;top:166.11px;font-size:11.2px;color:#535c69;letter-spacing:0.056px;">9.00 - 18.00 Uhr</span>
<span id="a70" class="t" style="left:1160.6px;top:153.70px;font-size:11.2px;color:#535c69;letter-spacing:-0.386px;">16.11.2021</span>
<span id="a71" class="t" style="left:1160.6px;top:166.50px;font-size:11.2px;color:#535c69;letter-spacing:0.020px;">17:29:09</span>
<span id="a72" class="t" style="left:1160.6px;top:238.50px;font-size:11.2px;color:#535c69;letter-spacing:0.056px;">03.07.2023</span>
<span id="a73" class="t" style="left:1160.6px;top:251.31px;font-size:11.2px;color:#535c69;letter-spacing:-0.038px;">15:27:55</span>
<span id="a74" class="t" style="left:1160.6px;top:284.81px;font-size:11.2px;color:#535c69;letter-spacing:-0.264px;">20.11.2021</span>
<span id="a75" class="t" style="left:1160.6px;top:297.61px;font-size:11.2px;color:#535c69;letter-spacing:0.177px;">14:49:39</span>
<span id="a76" class="t" style="left:220px;top:346.20px;font-size:8.8px;color:#6a737f;font-weight:bold;letter-spacing:-0.109px;">AUSGEWÄHLT:</span>
<span id="a77" class="t" style="left:286.25px;top:346.20px;font-size:8.8px;color:#333;font-weight:bold;letter-spacing:0.281px;">0 / 3</span>
<span id="a78" class="t" style="left:333.75px;top:346.20px;font-size:8.8px;color:#6a737f;font-weight:bold;letter-spacing:-0.016px;">GESAMT:</span>
<span id="a79" class="t" style="left:376.25px;top:346.20px;font-size:8.8px;color:#333;font-weight:bold;">3</span>
<span id="a80" class="t" style="left:484.5px;top:346.20px;font-size:8.8px;color:#6a737f;font-weight:bold;letter-spacing:-0.159px;">SEITEN:</span>
<span id="a81" class="t" style="left:524px;top:346.20px;font-size:8.8px;color:#333;font-weight:bold;">1</span>
<span id="a82" class="t" style="left:562.25px;top:346.20px;font-size:8.8px;color:#6a737f;font-weight:bold;letter-spacing:-0.228px;">ZURÜCK</span>
<span id="a83" class="t" style="left:617.25px;top:346.20px;font-size:8.8px;color:#6a737f;font-weight:bold;letter-spacing:-0.294px;">WEITER</span>
<span id="a84" class="t" style="left:1114px;top:345.41px;font-size:8.8px;color:#6a737f;font-weight:bold;letter-spacing:-0.338px;">EINTRÄGE</span>
<span id="a85" class="t" style="left:1172.7px;top:344.00px;font-size:11.2px;color:#535c69;letter-spacing:-0.753px;">20</span>
<span id="a86" class="t" style="left:239.5px;top:389.81px;font-size:8.8px;color:#a8adb4;font-weight:bold;letter-spacing:0.456px;">LÖSCHEN</span>
<span id="a87" class="t" style="left:213.2px;top:624.41px;font-size:11px;color:#fff;letter-spacing:0.159px;">Bitrix24</span>
<span id="a88" class="t" style="left:281.3px;top:624.41px;font-size:11px;color:#fff;letter-spacing:-0.043px;">Deutsch</span>
<span id="a89" class="t" style="left:356.5px;top:625.41px;font-size:10.3px;color:rgba(255,255,255,.62);letter-spacing:0.338px;">© 2026 Bitrix24</span>
<span id="a90" class="t" style="left:444.7px;top:625.41px;font-size:10.3px;color:rgba(255,255,255,.62);letter-spacing:0.050px;">Anfrage zur Implementierung</span>
<span id="a91" class="t" style="left:591.7px;top:625.41px;font-size:10.3px;color:rgba(255,255,255,.62);letter-spacing:0.087px;">Design</span>
<span id="a92" class="t" style="left:636.6px;top:625.41px;font-size:10.3px;color:rgba(255,255,255,.62);letter-spacing:0.009px;">Drucken</span>
<div id="tip"></div>
<div id="pop">
<svg class="abs" style="left:166px;top:45px" width="7" height="11" viewBox="0 0 7 11"><path d="M1 .8 5.800 5.500 1 10.200" stroke="#c3c7cc" stroke-width="1" fill="none"/></svg>
<div class="abs" style="left:90.500px;top:76.200px;width:81.500px;height:1px;background:#f0f1f2"></div>
<div class="abs" style="left:92.700px;top:158.700px;width:79.300px;height:1px;background:#f0f1f2"></div>
<svg class="abs" style="left:21.300px;top:98.800px" width="11" height="11" viewBox="0 0 11 11"><g fill="#1d8bea"><circle cx="5.500" cy="5.500" r="3.700"/><g stroke="#1d8bea" stroke-width="1.900"><path d="M5.500 .2v10.600M.2 5.500h10.600M1.750 1.750l7.500 7.500M9.250 1.750l-7.500 7.500"/></g></g><circle cx="5.500" cy="5.500" r="2" fill="#fff"/></svg>
</div>
<span id="p0" class="t" style="left:698.5px;top:56.76px;font-size:11.4px;color:#424242;letter-spacing:-0.056px;">Analytik</span>
<span id="p1" class="t" style="left:698.5px;top:84.76px;font-size:11.4px;color:#424242;letter-spacing:-0.117px;">Einstellungen</span>
<span id="p2" class="t" style="left:698.5px;top:111.75px;font-size:10.5px;color:#b8babd;letter-spacing:-0.046px;">Einstellungen</span>
<span id="p3" class="t" style="left:714.25px;top:138.51px;font-size:11.4px;color:#424242;letter-spacing:-0.045px;">Menü konfigurieren</span>
<span id="p4" class="t" style="left:698.5px;top:166.76px;font-size:11.4px;color:#424242;letter-spacing:-0.033px;">Menü zurücksetzen</span>
<span id="p5" class="t" style="left:698.5px;top:193.50px;font-size:10.5px;color:#b8babd;letter-spacing:0.070px;">Ausgeblendet</span>
<span id="p6" class="t" style="left:698.5px;top:220.51px;font-size:11.4px;color:#2f8af0;letter-spacing:-0.223px;">Lager</span>
<span id="p7" class="t" style="left:698.5px;top:248.51px;font-size:11.4px;color:#424242;letter-spacing:-0.005px;">Datenübertragung</span>
<span id="p8" class="t" style="left:1039.6px;top:102.81px;font-size:11.4px;color:#424242;letter-spacing:-0.013px;">Einstellungen der benutzerdefinierten Felder</span>
<div class="abs" style="left:0;top:651.400px;width:10px;height:10px;background:radial-gradient(circle at 100% 0,rgba(40,40,40,0) 9.500px,#2b2b2b 10.300px)"></div>
<div class="red" style="left:8.700px;top:484.400px;width:169.600px;height:32.600px"></div>
<div class="badge" style="left:166.600px;top:473.900px">1</div>
<div class="red" style="left:679.400px;top:6.300px;width:56.200px;height:26.900px"></div>
<div class="badge" style="left:723.900px;top:21.800px">2</div>
<div class="red" style="left:682px;top:210px;width:115.200px;height:31.500px"></div>
<div class="badge" style="left:784.500px;top:198.900px">3</div>
<div class="red" style="left:1199.700px;top:60.400px;width:28.800px;height:24.300px"></div>
<div class="badge" style="left:1220px;top:49.200px">4</div>
<div class="red" style="left:1029.600px;top:87.600px;width:244.300px;height:37.700px"></div>
<div class="badge" style="left:1022.100px;top:114px">5</div>
</div>
</body>
</html>
